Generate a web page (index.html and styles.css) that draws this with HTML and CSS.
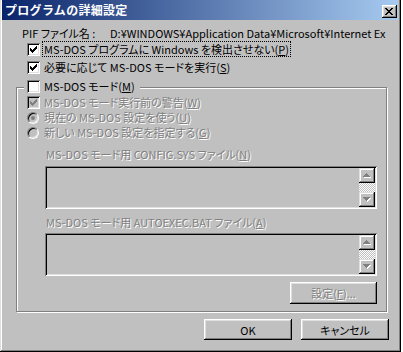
FILE: index.html
```html
<!DOCTYPE html>
<html lang="ja">
<head>
    <meta charset="UTF-8">
    <title>プログラムの詳細設定</title>
    <link rel="stylesheet" href="styles.css">
</head>
<body>
    <div class="window">
        <div class="titlebar">
            <span class="title">プログラムの詳細設定</span>
            <span class="close">
                <svg width="8" height="7" viewBox="0 0 8 7">
                    <path d="M0 0h2v1h1v1h2v-1h1v-1h2v1h-1v1h-1v1h-1v1h1v1h1v1h1v1h-2v-1h-1v-1h-2v1h-1v1h-2v-1h1v-1h1v-1h1v-1h-1v-1h-1v-1h-1z" fill="#000"/>
                </svg>
            </span>
        </div>

        <div class="pif">
            <span class="pif-label">PIF ファイル名 :</span>
            <span class="pif-path">D:¥WINDOWS¥Application Data¥Microsoft¥Internet Ex</span>
        </div>

        <div class="row first">
            <span class="check"><svg class="tick" width="13" height="13" viewBox="0 0 13 13"><path d="M3 5h1v1h1v1h1v-1h1v-1h1v-1h1v-1h1v3h-1v1h-1v1h-1v1h-1v1h-1v-1h-1v-1h-1z"/></svg></span>
            <span class="label focus">MS-DOS プログラムに Windows を検出させない(<u>P</u>)</span>
        </div>
        <div class="row">
            <span class="check"><svg class="tick" width="13" height="13" viewBox="0 0 13 13"><path d="M3 5h1v1h1v1h1v-1h1v-1h1v-1h1v-1h1v3h-1v1h-1v1h-1v1h-1v1h-1v-1h-1v-1h-1z"/></svg></span>
            <span class="label">必要に応じて MS-DOS モードを実行(<u>S</u>)</span>
        </div>

        <div class="group">
            <div class="row caption">
                <span class="check"></span>
                <span class="label">MS-DOS モード(<u>M</u>)</span>
            </div>
            <div class="row off">
                <span class="check"><svg class="tick" width="13" height="13" viewBox="0 0 13 13"><path d="M3 5h1v1h1v1h1v-1h1v-1h1v-1h1v-1h1v3h-1v1h-1v1h-1v1h-1v1h-1v-1h-1v-1h-1z"/></svg></span>
                <span class="label">MS-DOS モード実行前の警告(<u>W</u>)</span>
            </div>
            <div class="row radio-row off">
                <span class="radio"><span class="dot"></span></span>
                <span class="label">現在の MS-DOS 設定を使う(<u>U</u>)</span>
            </div>
            <div class="row radio-row off">
                <span class="radio"></span>
                <span class="label">新しい MS-DOS 設定を指定する(<u>G</u>)</span>
            </div>

            <div class="field-label off">MS-DOS モード用 CONFIG.SYS ファイル(<u>N</u>)</div>
            <div class="textbox">
                <div class="scrollbar">
                    <span class="sb-btn">
                        <svg width="8" height="5" viewBox="0 0 8 5"><path d="M4 1h1v1h1v1h1v1h1v1h-7v-1h1v-1h1v-1h1z" fill="#fff"/><path d="M3 0h1v1h1v1h1v1h1v1h-7v-1h1v-1h1v-1h1z" fill="#808080"/></svg>
                    </span>
                    <span class="sb-track"></span>
                    <span class="sb-btn">
                        <svg width="8" height="5" viewBox="0 0 8 5"><path d="M1 1h7v1h-1v1h-1v1h-1v1h-1v-1h-1v-1h-1v-1h-1z" fill="#fff"/><path d="M0 0h7v1h-1v1h-1v1h-1v1h-1v-1h-1v-1h-1v-1h-1z" fill="#808080"/></svg>
                    </span>
                </div>
            </div>

            <div class="field-label off second">MS-DOS モード用 AUTOEXEC.BAT ファイル(<u>A</u>)</div>
            <div class="textbox">
                <div class="scrollbar">
                    <span class="sb-btn">
                        <svg width="8" height="5" viewBox="0 0 8 5"><path d="M4 1h1v1h1v1h1v1h1v1h-7v-1h1v-1h1v-1h1z" fill="#fff"/><path d="M3 0h1v1h1v1h1v1h1v1h-7v-1h1v-1h1v-1h1z" fill="#808080"/></svg>
                    </span>
                    <span class="sb-track"></span>
                    <span class="sb-btn">
                        <svg width="8" height="5" viewBox="0 0 8 5"><path d="M1 1h7v1h-1v1h-1v1h-1v1h-1v-1h-1v-1h-1v-1h-1z" fill="#fff"/><path d="M0 0h7v1h-1v1h-1v1h-1v1h-1v-1h-1v-1h-1v-1h-1z" fill="#808080"/></svg>
                    </span>
                </div>
            </div>

            <div class="group-actions">
                <button type="button" class="btn settings" disabled>設定(<u>F</u>)...</button>
            </div>
        </div>

        <div class="actions">
            <button type="button" class="btn">OK</button>
            <button type="button" class="btn">キャンセル</button>
        </div>
    </div>
</body>
</html>
```

FILE: styles.css
```css
body {
    margin: 0;
    background-color: #fff;
    font-family: "Noto Sans CJK JP", "Liberation Sans", sans-serif;
    font-size: 11px;
    font-feature-settings: "palt";
    color: #000;
}

u {
    text-decoration-thickness: 1px;
    text-underline-offset: 1px;
}

.window {
    width: 401px;
    height: 352px;
    box-sizing: border-box;
    background-color: #c0c0c0;
    box-shadow: inset -1px -1px #000, inset 1px 0 #dfdfdf, inset -2px -2px #808080, inset 2px 0 #fff;
    display: flex;
    flex-direction: column;
    overflow: hidden;
}

.titlebar {
    height: 20px;
    margin: 0 3px 0 2px;
    padding: 0 1px 0 3px;
    background: linear-gradient(to right, #0a246a, #a6caf0);
    display: flex;
    align-items: flex-start;
    justify-content: space-between;
}

.title {
    color: #fff;
    font-weight: bold;
    font-size: 12px;
    letter-spacing: 0.3px;
    line-height: 14px;
    padding-top: 3px;
    font-feature-settings: normal;
}

.close {
    width: 15px;
    height: 13px;
    margin-top: 5px;
    box-sizing: border-box;
    background-color: #c0c0c0;
    box-shadow: inset -1px -1px #000, inset 1px 1px #fff, inset -2px -2px #808080, inset 2px 2px #dfdfdf;
    display: flex;
    align-items: center;
    justify-content: center;
    padding-right: 1px;
}

.close svg {
    shape-rendering: crispEdges;
}

.pif {
    margin: 6px 0 0 22px;
    height: 14px;
    line-height: 14px;
    display: flex;
    white-space: nowrap;
}

.pif-label {
    flex: none;
    width: 88px;
}

/* checkbox / radio rows */

.row {
    display: flex;
    align-items: center;
    gap: 2px;
    height: 16px;
    margin: 2px 0 0 27px;
    line-height: 14px;
    white-space: nowrap;
}

.row.first {
    margin-top: 1px;
}

.label {
    padding: 0 1px;
    border: 1px solid transparent;
}

.label.focus {
    border: 1px dotted #000;
}

.check {
    width: 13px;
    height: 13px;
    flex: none;
    background-color: #fff;
    box-shadow: inset 1px 1px #808080, inset -1px -1px #fff, inset 2px 2px #000, inset -2px -2px #dfdfdf;
}

.tick {
    display: block;
    shape-rendering: crispEdges;
    fill: #000;
}

.radio {
    width: 12px;
    height: 12px;
    flex: none;
    box-sizing: border-box;
    border-radius: 50%;
    border: 1px solid;
    border-color: #808080 #fff #fff #808080;
    box-shadow: inset 1px 1px #000, inset -1px -1px #dfdfdf;
    background-color: #fff;
    display: flex;
    align-items: center;
    justify-content: center;
}

.dot {
    width: 4px;
    height: 4px;
    border-radius: 50%;
    background-color: #000;
}

.off .label,
.field-label.off,
.btn:disabled {
    color: #808080;
    text-shadow: 1px 1px #fff;
}

.off .check,
.off .radio {
    background-color: #c0c0c0;
}

.off .tick {
    fill: #808080;
}

.off .dot {
    background-color: #808080;
}

/* group box */

.group {
    width: 371px;
    margin: 12px 0 0 16px;
    box-sizing: border-box;
    border: 1px solid #808080;
    box-shadow: inset 1px 1px #fff, 1px 1px #fff;
    padding: 0 9px 7px 10px;
    display: flex;
    flex-direction: column;
}

.group .row {
    margin-left: 0;
    margin-top: 1px;
}

.group .row.caption {
    margin: -9px 0 0 -3px;
    padding: 0 3px;
    height: 14px;
    width: fit-content;
    background-color: #c0c0c0;
}

.group .radio-row {
    height: 15px;
    gap: 3px;
    margin-top: 0;
    line-height: 13px;
}

.field-label {
    margin: 7px 0 0 19px;
    height: 14px;
    line-height: 14px;
    white-space: nowrap;
}

.field-label.second {
    margin-top: 6px;
}

.textbox {
    margin: 5px 0 0 18px;
    width: 332px;
    height: 43px;
    box-sizing: border-box;
    padding: 2px;
    box-shadow: inset 1px 1px #808080, inset -1px -1px #fff, inset 2px 2px #000, inset -2px -2px #dfdfdf;
    display: flex;
    justify-content: flex-end;
}

.field-label.second + .textbox {
    margin-top: 4px;
}

.scrollbar {
    width: 16px;
    display: flex;
    flex-direction: column;
}

.sb-btn {
    height: 15px;
    flex: none;
    background-color: #c0c0c0;
    box-shadow: inset -1px -1px #000, inset 1px 1px #dfdfdf, inset -2px -2px #808080, inset 2px 2px #fff;
    display: flex;
    align-items: center;
    justify-content: center;
}

.sb-btn svg {
    shape-rendering: crispEdges;
}

.sb-track {
    flex: 1;
    background: repeating-conic-gradient(#fff 0 25%, #c0c0c0 0 50%) 0 0 / 2px 2px;
}

.group-actions {
    display: flex;
    justify-content: flex-end;
    margin-top: 6px;
}

/* buttons */

.btn {
    width: 88px;
    height: 21px;
    padding: 0;
    border: none;
    font-family: inherit;
    font-size: 11px;
    font-feature-settings: "palt";
    color: #000;
    background-color: #c0c0c0;
    box-shadow: inset -1px -1px #000, inset 1px 1px #fff, inset -2px -2px #808080, inset 2px 2px #dfdfdf;
}

.btn.settings {
    width: 87px;
    height: 22px;
}

.actions {
    display: flex;
    justify-content: flex-end;
    gap: 9px;
    margin: 7px 12px 0 0;
}
```
